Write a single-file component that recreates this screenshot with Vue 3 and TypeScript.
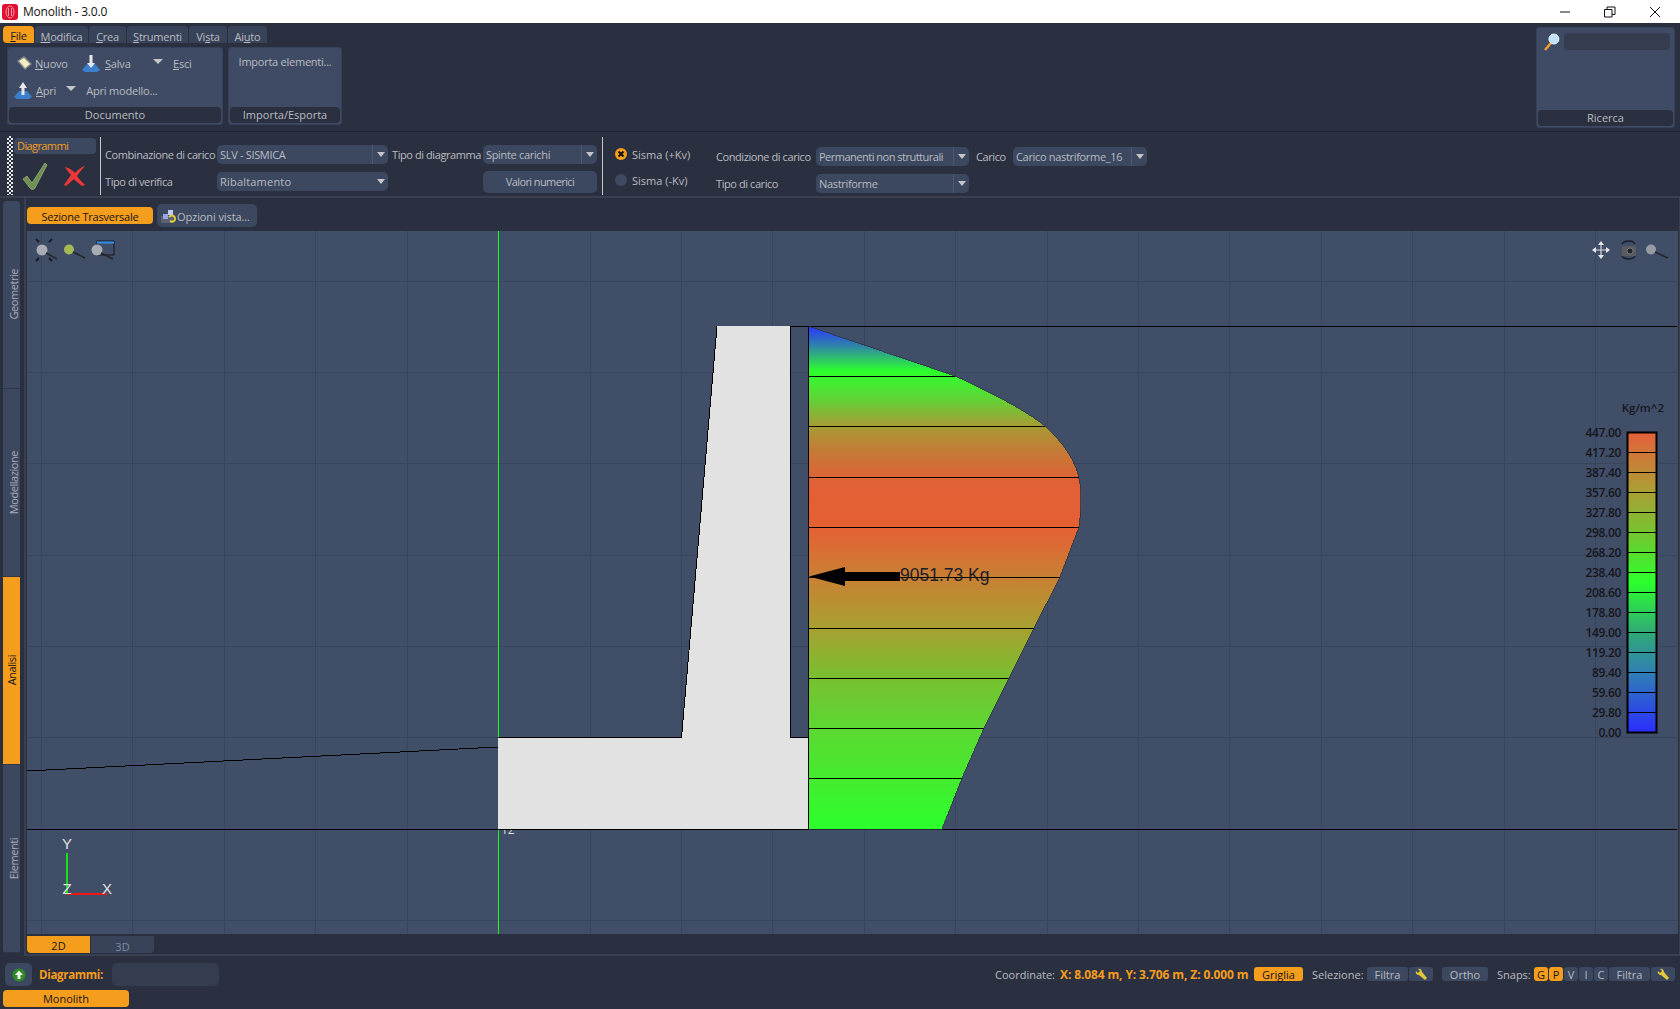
<script setup lang="ts">
const menus = [
  { pre: '', u: 'F', post: 'ile', w: 31, active: true },
  { pre: '', u: 'M', post: 'odifica', w: 53 },
  { pre: '', u: 'C', post: 'rea', w: 37 },
  { pre: '', u: 'S', post: 'trumenti', w: 61 },
  { pre: 'Vi', u: 's', post: 'ta', w: 38 },
  { pre: 'Ai', u: 'u', post: 'to', w: 39 },
]
const vGrid = Array.from({ length: 19 }, (_, i) => Math.round(41 + i * 91.42) + 0.5)
const hGrid = [281, 372, 463, 555, 646, 737, 829, 920].map((y) => y + 0.5)
const bands = [
  [376.5, 955], [426.5, 1045], [477.5, 1079], [527.5, 1079], [577.5, 1060],
  [628.5, 1034], [678.5, 1009], [728.5, 984], [778.5, 962],
]
const scale = [
  '447.00', '417.20', '387.40', '357.60', '327.80', '298.00', '268.20', '238.40',
  '208.60', '178.80', '149.00', '119.20', '89.40', '59.60', '29.80', '0.00',
]
const sideTabs = [
  { label: 'Geometrie' }, { label: 'Modellazione' }, { label: 'Analisi', active: true }, { label: 'Elementi' },
]
</script>

<template>
  <div class="app">
    <header class="titlebar">
      <svg class="logo" width="16" height="16" viewBox="0 0 16 16">
        <rect x="0" y="0" width="16" height="16" rx="3" fill="#e01030" />
        <ellipse cx="8" cy="8" rx="4" ry="6" fill="none" stroke="#f59aa5" stroke-width="1" />
        <path d="M6.5 4v8M9.500 4v8" stroke="#f59aa5" stroke-width="1" />
      </svg>
      <span class="title">Monolith - 3.0.0</span>
      <div class="winbtns">
        <svg width="12" height="12" viewBox="0 0 12 12"><path d="M1 6h10" stroke="#111" fill="none" /></svg>
        <svg width="12" height="12" viewBox="0 0 12 12"><path d="M.5 3.500h7.500v7.500H.5zM3 3.500V1h8v7.500H8" stroke="#111" fill="none" /></svg>
        <svg width="12" height="12" viewBox="0 0 12 12"><path d="M1 1l10 10M11 1L1 11" stroke="#111" fill="none" /></svg>
      </div>
    </header>

    <section class="top">
      <div class="top-left">
        <nav class="menu">
          <div v-for="m in menus" :key="m.post" class="menu-tab" :class="{ on: m.active }" :style="{ width: m.w + 'px' }">{{ m.pre }}<u>{{ m.u }}</u>{{ m.post }}</div>
        </nav>
        <div class="ribbon">
          <div class="group doc">
            <div class="group-body doc-body">
              <div class="doc-row">
                <span class="doc-item nuovo">
                  <svg width="18" height="18" viewBox="0 0 18 18">
                    <path d="M2 6l7-5 8 8-7 6z" fill="#fffbe0" opacity=".35" />
                    <path d="M4 6l5-3 6 6-5 4z" fill="#f3efc0" />
                  </svg>
                  <span><u>N</u>uovo</span>
                </span>
                <span class="doc-item salva">
                  <svg width="18" height="18" viewBox="0 0 18 18">
                    <path d="M0 15l5-6h8l5 6-3 2H3z" fill="#3a80cc" />
                    <path d="M7.500 0h3v8h2.500L9 13 5 8h2.500z" fill="#e8e8ec" />
                  </svg>
                  <span><u>S</u>alva</span>
                </span>
                <i class="tri big esci-tri"></i>
                <span class="esci"><u>E</u>sci</span>
              </div>
              <div class="doc-row row2">
                <span class="doc-item apri">
                  <svg width="18" height="18" viewBox="0 0 18 18">
                    <path d="M0 15l5-6h8l5 6-3 2H3z" fill="#3a80cc" />
                    <path d="M9 0l4 6h-2.500v7h-3V6H5z" fill="#e8e8ec" />
                  </svg>
                  <span><u>A</u>pri</span>
                </span>
                <i class="tri big apri-tri"></i>
                <span class="apri-model">Apri modello...</span>
              </div>
            </div>
            <div class="caption">Documento</div>
          </div>
          <div class="group imp">
            <div class="group-body imp-body">Importa elementi...</div>
            <div class="caption">Importa/Esporta</div>
          </div>
        </div>
      </div>
      <div class="group search">
        <div class="group-body search-body">
          <svg width="17" height="18" viewBox="0 0 17 18">
            <path d="M2 17l6-7" stroke="#f5a030" stroke-width="2.500" />
            <circle cx="11" cy="6" r="5" fill="#bfe4fa" stroke="#eef7fd" />
          </svg>
          <div class="search-input"></div>
        </div>
        <div class="caption">Ricerca</div>
      </div>
    </section>

    <section class="toolbar">
      <div class="handle"></div>
      <div class="tool-head">
        <div class="tool-title">Diagrammi</div>
        <div class="tool-icons">
          <svg width="26" height="28" viewBox="0 0 26 28">
            <path d="M1 17l4-3 5 7L23 1l2 2-12 23c-1 2-4 2-5 0z" fill="#6f9050" stroke="#9fb88a" stroke-width=".7" />
          </svg>
          <svg width="24" height="22" viewBox="0 0 24 22">
            <path d="M2 2c5 1 8 4 10 6 3-3 6-6 10-7-3 3-6 7-8 10 2 3 5 6 8 9l-3 1c-3-2-6-5-8-7-3 2-5 5-8 7l-2-1c2-3 5-7 7-10C6 8 4 5 2 2z" fill="#ee3838" />
          </svg>
        </div>
      </div>
      <div class="vsep"></div>
      <div class="fields f1">
        <span class="lab">Combinazione di carico</span>
        <div class="combo"><span>SLV - SISMICA</span><b><i class="tri"></i></b></div>
        <span class="lab">Tipo di verifica</span>
        <div class="combo wide"><span>Ribaltamento</span><b class="plain"><i class="tri"></i></b></div>
      </div>
      <div class="fields f2">
        <span class="lab">Tipo di diagramma</span>
        <div class="combo"><span>Spinte carichi</span><b><i class="tri"></i></b></div>
        <span></span>
        <div class="btn-values">Valori numerici</div>
      </div>
      <div class="vsep s2"></div>
      <div class="radios">
        <div class="radio-row">
          <svg width="14" height="14" viewBox="0 0 14 14">
            <circle cx="7" cy="7" r="6" fill="#f59d1c" />
            <path d="M4.500 4.500l5 5M9.500 4.500l-5 5" stroke="#111" stroke-width="2" />
          </svg>
          <span>Sisma (+Kv)</span>
        </div>
        <div class="radio-row">
          <svg width="14" height="14" viewBox="0 0 14 14"><circle cx="7" cy="7" r="6" fill="#3d4a62" /></svg>
          <span>Sisma (-Kv)</span>
        </div>
      </div>
      <div class="fields f3">
        <span class="lab">Condizione di carico</span>
        <div class="combo tight"><span>Permanenti non strutturali</span><b><i class="tri"></i></b></div>
        <span class="lab carico">Carico</span>
        <div class="combo"><span>Carico nastriforme_16</span><b><i class="tri"></i></b></div>
        <span class="lab">Tipo di carico</span>
        <div class="combo"><span>Nastriforme</span><b><i class="tri"></i></b></div>
      </div>
    </section>

    <main class="main">
      <aside class="side">
        <div v-for="t in sideTabs" :key="t.label" class="side-tab" :class="{ on: t.active }"><span>{{ t.label }}</span></div>
      </aside>
      <div class="panel">
        <div class="tabstrip">
          <div class="tab-on">Sezione Trasversale</div>
          <div class="tab-opt">
            <svg width="17" height="15" viewBox="0 0 17 15">
              <rect x="1" y="7" width="12" height="7" fill="#5b6272" />
              <rect x="3" y="5" width="5" height="5" fill="#9aa4e8" />
              <rect x="8" y="1" width="5" height="5" fill="#c6c9f0" />
              <path d="M9 8c3-3 6-1 6 2s-3 3-5 2" fill="none" stroke="#e4d238" stroke-width="2" />
            </svg>
            <span>Opzioni vista...</span>
          </div>
        </div>

        <div class="canvas">
          <svg class="scene" width="1650" height="703" viewBox="27 231 1650 703">
            <defs>
              <linearGradient id="pressure" gradientUnits="userSpaceOnUse" x1="0" y1="326" x2="0" y2="829">
                <stop offset="0" stop-color="#2a34ff" />
                <stop offset=".04" stop-color="#2f85a8" />
                <stop offset=".09" stop-color="#2cff2c" />
                <stop offset=".14" stop-color="#5ad835" />
                <stop offset=".2" stop-color="#a89a35" />
                <stop offset=".25" stop-color="#c47a36" />
                <stop offset=".31" stop-color="#e26036" />
                <stop offset=".4" stop-color="#e56033" />
                <stop offset=".5" stop-color="#c98034" />
                <stop offset=".6" stop-color="#a8a030" />
                <stop offset=".7" stop-color="#78c030" />
                <stop offset=".8" stop-color="#5cd832" />
                <stop offset="1" stop-color="#2cff2c" />
              </linearGradient>
              <linearGradient id="bar" x1="0" y1="1" x2="0" y2="0">
                <stop offset="0" stop-color="#2a2dff" />
                <stop offset=".2" stop-color="#3080b4" />
                <stop offset=".33" stop-color="#30a878" />
                <stop offset=".5" stop-color="#2cff2c" />
                <stop offset=".68" stop-color="#7cc030" />
                <stop offset=".82" stop-color="#b09a36" />
                <stop offset="1" stop-color="#e5603a" />
              </linearGradient>
              <clipPath id="tick"><rect x="498" y="830" width="30" height="5" /></clipPath>
            </defs>

            <path v-for="x in vGrid" :key="'v' + x" :d="`M${x} 231V934`" class="grid" />
            <path v-for="y in hGrid" :key="'h' + y" :d="`M27 ${y}H1677`" class="grid" />
            <path d="M498.500 231V934" class="axis-green" />

            <path d="M717 326.500H1677M27 829.500H1677" class="blk" />
            <path d="M27 771L498 747" class="blk" />
            <path d="M717 326H790V737.500H808.500V829H498V737.500H681.500Z" fill="#e2e2e2" />
            <path d="M681.500 737.500H498M681.500 737.500L717 326.500M790.500 326V737.500H808.500V829" class="blk" />
            <text x="501" y="834" class="tick" clip-path="url(#tick)">12</text>

            <path d="M808 326L955 376C990 392 1025 410 1045 426C1065 445 1081 465 1081 497C1081 510 1080 520 1079 527L1060 577L1034 628L1009 678L984 728L962 778L942 829H808Z" fill="url(#pressure)" stroke="#2d3440" stroke-width=".8" shape-rendering="crispEdges" />
            <path v-for="b in bands" :key="b[0]" :d="`M809 ${b[0]}H${b[1]}`" class="blk" />
            <path d="M808.500 326V829" class="blk" />
            <path d="M809 576.500L845 567V572H900V581H845V586Z" fill="#000" />
            <text x="900" y="581" class="force">9051.73 Kg</text>

            <!-- view icons, top left -->
            <g>
              <path d="M36 239l3 3M52 239l-3 3M36 261l3-3M52 261l-3-3" stroke="#181c28" stroke-width="2" />
              <circle cx="42" cy="250" r="5.500" fill="#a9adb3" />
              <path d="M46 253l11 6" stroke="#23262e" stroke-width="1.500" />
              <circle cx="69" cy="249.500" r="5" fill="#a3ba55" />
              <path d="M73 252l12 6" stroke="#23262e" stroke-width="1.500" />
              <path d="M97 241h17v14H97z" fill="none" stroke="#14161e" />
              <path d="M97 241.500h17v2H97z" fill="#3090ea" />
              <circle cx="97" cy="250" r="5.500" fill="#a9adb3" />
              <path d="M101 253l12 6" stroke="#23262e" stroke-width="1.500" />
            </g>

            <!-- view icons, top right -->
            <g>
              <path d="M1601 243v14M1594 250h14" stroke="#d6d8dc" stroke-width="1.200" />
              <path d="M1601 241l-3 4h6zM1601 259l-3-4h6zM1592 250l4-3v6zM1610 250l-4-3v6z" fill="#e8e8e8" />
              <path d="M1622 244c3-4 11-4 13 0M1622 256c3 4 11 4 13 0" fill="none" stroke="#1a1d26" stroke-width="1.300" />
              <rect x="1622" y="246" width="14" height="10" rx="1" fill="#5a5c60" />
              <circle cx="1630" cy="251" r="3" fill="#24262c" stroke="#8a8c90" stroke-width=".7" />
              <circle cx="1651" cy="249.500" r="5" fill="#989da3" />
              <path d="M1655 252l13 6" stroke="#23262e" stroke-width="1.500" />
            </g>

            <!-- axes -->
            <path d="M67 853V893" stroke="#16e016" stroke-width="2" />
            <path d="M67 894H107" stroke="#ee1818" stroke-width="2" />
            <text x="67" y="849" class="axis">Y</text>
            <text x="67" y="894" class="axis">Z</text>
            <text x="107" y="894" class="axis">X</text>

            <!-- scale -->
            <text x="1664" y="412" class="unit">Kg/m^2</text>
            <rect x="1627.500" y="432.500" width="29" height="300" fill="url(#bar)" stroke="#000" stroke-width="2" />
            <path v-for="i in 14" :key="'s' + i" :d="`M1627 ${432.500 + i * 20}H1657`" stroke="#000" />
            <text v-for="(s, i) in scale" :key="s" x="1621" :y="436.500 + i * 20" class="val">{{ s }}</text>
          </svg>
        </div>

        <div class="bottabs">
          <div class="bt on">2D</div>
          <div class="bt">3D</div>
        </div>
      </div>
    </main>

    <footer class="status">
      <div class="st-left">
        <div class="up">
          <svg width="14" height="14" viewBox="0 0 14 14">
            <circle cx="7" cy="7" r="6.500" fill="#2f8c26" />
            <path d="M7 2.500l4 4.500H8.500v4h-3V7H3z" fill="#f0f4ee" />
          </svg>
        </div>
        <span class="st-name">Diagrammi:</span>
        <div class="st-box"></div>
      </div>
      <div class="st-right">
        <span class="coord">Coordinate:</span>
        <b class="coord-v">X: 8.084 m, Y: 3.706 m, Z: 0.000 m</b>
        <span class="chip griglia">Griglia</span>
        <span class="cap sel">Selezione:</span>
        <span class="chip filtra">Filtra</span>
        <span class="chip wr">
          <svg width="13" height="13" viewBox="0 0 13 13"><path d="M1 3l2 2 2-2-2-2c2-1 4 1 4 3l5 6-2 2-6-5C2 7 0 5 1 3z" fill="#e2c83a" /></svg>
        </span>
        <span class="chip ortho">Ortho</span>
        <span class="cap snaps">Snaps:</span>
        <span class="chip ltr on">G</span>
        <span class="chip ltr on">P</span>
        <span class="chip ltr">V</span>
        <span class="chip ltr">I</span>
        <span class="chip ltr">C</span>
        <span class="chip filtra">Filtra</span>
        <span class="chip wr">
          <svg width="13" height="13" viewBox="0 0 13 13"><path d="M1 3l2 2 2-2-2-2c2-1 4 1 4 3l5 6-2 2-6-5C2 7 0 5 1 3z" fill="#e2c83a" /></svg>
        </span>
      </div>
    </footer>
    <div class="app-tab-row"><div class="app-tab">Monolith</div></div>
  </div>
</template>

<style scoped>
.app {
  width: 1680px;
  height: 1009px;
  overflow: hidden;
  display: flex;
  flex-direction: column;
  background: #2b3040;
  color: #b9bcc0;
  font: 11px "Open Sans", "Noto Sans", sans-serif;
}
u { text-underline-offset: 1px; }

.titlebar {
  height: 23px;
  flex: none;
  background: #fff;
  display: flex;
  align-items: center;
  padding-left: 2px;
  color: #111;
}
.logo { margin-right: 5px; }
.title { font-size: 12px; letter-spacing: -.2px; }
.winbtns {
  margin-left: auto;
  display: flex;
  gap: 33px;
  margin-right: 19px;
}

.top { height: 108px; flex: none; display: flex; }
.top-left { flex: 1; }
.menu { display: flex; gap: 1px; margin: 3px 0 0 3px; height: 17px; }
.menu-tab {
  background: #38435a;
  border-radius: 4px 4px 0 0;
  text-align: center;
  line-height: 22px;
  white-space: nowrap;
  letter-spacing: -.25px;
  overflow: hidden;
}
.menu-tab.on { background: #f59d1c; color: #15161a; line-height: 19px; border-radius: 4px 4px 0 4px; }

.ribbon { display: flex; gap: 5px; margin: 4px 0 0 7px; }
.group {
  height: 78px;
  box-sizing: border-box;
  background: #3f4b64;
  border-radius: 4px;
  box-shadow: inset 0 0 0 1px #36415a;
  display: flex;
  flex-direction: column;
  padding: 0 2px 2px;
}
.group-body { flex: 1; }
.caption {
  height: 16px;
  flex: none;
  background: #2b3040;
  border-radius: 4px;
  text-align: center;
  line-height: 16px;
}
.doc { width: 216px; }
.imp { width: 114px; }
.doc-row { display: flex; align-items: center; height: 19px; margin-top: 7px; position: relative; letter-spacing: -.2px; }
.row2 { margin-top: 8px; }
.doc-item { display: flex; align-items: center; gap: 2px; }
.nuovo { margin-left: 6px; width: 67px; }
.salva { width: 71px; gap: 5px; }
.esci { margin-left: 10px; }
.apri { margin-left: 5px; gap: 4px; }
.apri-model { margin-left: 10px; }
.tri {
  display: block;
  width: 0;
  height: 0;
  border-left: 4px solid transparent;
  border-right: 4px solid transparent;
  border-top: 5px solid #c4c6ca;
}
.tri.big { border-left-width: 5px; border-right-width: 5px; }
.apri-tri { margin-left: 10px; margin-top: -4px; }
.esci-tri { margin-top: -4px; }
.imp-body { text-align: center; padding-top: 7px; letter-spacing: -.25px; }

.search {
  width: 139px;
  height: 101px;
  margin: 4px 5px 0 0;
  flex: none;
}
.search-body { display: flex; align-items: flex-start; gap: 4px; padding: 6px 3px 0 5px; }
.search-input { width: 107px; height: 17px; background: #343c50; border-radius: 4px; }

.toolbar {
  height: 67px;
  flex: none;
  display: flex;
  align-items: flex-start;
  border-top: 1px solid #1f2431;
  border-bottom: 2px solid #3a4050;
  padding-left: 7px;
  box-sizing: border-box;
}
.handle {
  width: 6px;
  height: 59px;
  margin-top: 4px;
  background: repeating-conic-gradient(#e6e6e6 0 25%, transparent 0 50%) 0 0 / 4px 4px;
}
.tool-head { width: 82px; margin: 6px 0 0 1px; }
.tool-title {
  height: 16px;
  line-height: 16px;
  background: #3c4860;
  border-radius: 4px;
  color: #f59d1c;
  padding-left: 3px;
  letter-spacing: -.6px;
}
.tool-icons { display: flex; align-items: center; gap: 15px; padding: 8px 0 0 8px; }
.vsep { width: 1px; height: 58px; margin: 5px 4px 0 4px; background: #c8c8c8; flex: none; }
.vsep.s2 { margin: 5px 0 0 5px; }
.fields { display: grid; row-gap: 8px; align-items: center; white-space: nowrap; }
.lab { letter-spacing: -.42px; }
.f1 { grid-template-columns: 112px 171px; grid-auto-rows: 19px; margin-top: 13px; }
.f2 { grid-template-columns: 91px 114px; grid-auto-rows: 19px; margin: 13px 0 0 4px; }
.f3 { grid-template-columns: 100px 153px 44px 134px; grid-auto-rows: 19px; margin: 15px 0 0 0; }
.carico { margin-left: 7px; }
.combo {
  height: 19px;
  display: flex;
  align-items: stretch;
  background: #3c4860;
  border-radius: 5px;
  line-height: 19px;
  padding-left: 3px;
  letter-spacing: -.32px;
}
.combo.wide { letter-spacing: .2px; }
.combo.tight { letter-spacing: -.5px; }
.combo span { flex: 1; }
.combo b {
  width: 15px;
  flex: none;
  border-left: 1px solid #4d596f;
  display: flex;
  align-items: center;
  justify-content: center;
}
.combo b.plain { border-left-color: #3c4860; }
.btn-values {
  height: 22px;
  margin-top: 1px;
  line-height: 22px;
  text-align: center;
  background: #3c4860;
  border-radius: 5px;
  letter-spacing: -.6px;
}
.radios { width: 102px; margin: 15px 0 0 11px; display: flex; flex-direction: column; gap: 12px; flex: none; }
.radio-row { display: flex; align-items: center; gap: 4px; height: 14px; }

.main { height: 758px; flex: none; display: flex; }
.side {
  width: 17px;
  margin: 3px 4px 0 3px;
  height: 752px;
  display: flex;
  flex-direction: column;
  background: #3c4860;
  border-radius: 4px;
  flex: none;
}
.side-tab {
  flex: 1;
  display: flex;
  align-items: center;
  justify-content: center;
  border-bottom: 1px solid #2f3648;
  padding-left: 3px;
}
.side-tab span { writing-mode: vertical-rl; transform: rotate(180deg); color: #a9adb4; letter-spacing: -.45px; }
.side-tab.on { background: #f59d1c; padding-left: 0; }
.side-tab.on span { color: #15161a; }

.panel {
  flex: 1;
  border-left: 2px solid #3a4050;
  border-right: 1px solid #3a4050;
  border-bottom: 2px solid #3a4050;
  padding: 0 1px 0 1px;
  display: flex;
  flex-direction: column;
  min-width: 0;
}
.tabstrip { height: 33px; flex: none; display: flex; align-items: flex-start; gap: 4px; padding-top: 6px; box-sizing: border-box; }
.tab-on {
  margin-top: 3px;
  width: 126px;
  height: 17px;
  line-height: 19px;
  text-align: center;
  background: #f59d1c;
  border-radius: 4px;
  color: #15161a;
  letter-spacing: -.2px;
  overflow: hidden;
}
.tab-opt {
  width: 100px;
  height: 23px;
  display: flex;
  align-items: center;
  background: #3c4860;
  border-radius: 5px;
  padding: 1px 0 0 3px;
  box-sizing: border-box;
  letter-spacing: -.1px;
}
.canvas { height: 703px; flex: none; background: #414e68; }
.scene { display: block; }
.grid { stroke: #39455c; stroke-width: 1; fill: none; shape-rendering: crispEdges; }
.axis-green { stroke: #1cff1c; stroke-width: 1; shape-rendering: crispEdges; }
.blk { stroke: #000; stroke-width: 1; fill: none; shape-rendering: crispEdges; }
.tick { font: 12px "Open Sans", sans-serif; fill: #e0e0e0; }
.force { font: 17.500px "Liberation Sans", sans-serif; fill: #1d2026; }
.axis { font: 15px "Liberation Sans", sans-serif; fill: #e0e2e4; text-anchor: middle; }
.unit { font: 600 11.500px "Open Sans", sans-serif; fill: #15171d; text-anchor: end; }
.val { font: 600 12px "Open Sans", sans-serif; fill: #15171d; text-anchor: end; letter-spacing: -.35px; }

.bottabs { display: flex; gap: 1px; margin-top: 2px; }
.bt {
  width: 63px;
  height: 17px;
  line-height: 21px;
  text-align: center;
  background: #38435a;
  color: #7f8a9e;
  border-radius: 0 0 4px 0;
  overflow: hidden;
}
.bt.on { background: #f59d1c; color: #15161a; border-radius: 0 0 0 4px; line-height: 19px; }

.status { height: 32px; flex: none; display: flex; justify-content: space-between; }
.st-left { display: flex; align-items: flex-start; padding: 7px 0 0 5px; }
.up {
  width: 27px;
  height: 23px;
  background: #3c4860;
  border-radius: 5px;
  display: flex;
  align-items: center;
  justify-content: center;
}
.st-name { margin: 4px 0 0 7px; width: 73px; color: #f59d1c; font-weight: 700; font-size: 11.500px; letter-spacing: -.3px; }
.st-box { width: 107px; height: 23px; background: #343c50; border-radius: 5px; }
.st-right { display: flex; align-items: flex-start; padding: 11px 5px 0 0; line-height: 16px; }
.coord { line-height: 15px; width: 65px; }
.coord-v { line-height: 15px; width: 194px; color: #f59d1c; white-space: nowrap; font-size: 12px; letter-spacing: -.12px; }
.chip {
  height: 14px;
  padding-top: 1px;
  box-sizing: border-box;
  background: #3c4860;
  border-radius: 3px;
  text-align: center;
  display: flex;
  align-items: center;
  justify-content: center;
}
.griglia { width: 49px; background: #f59d1c; color: #15161a; }
.cap { line-height: 15px; }
.sel { width: 55px; margin-left: 9px; }
.filtra { width: 41px; }
.wr { width: 24px; margin-left: 1px; }
.ortho { width: 46px; margin-left: 9px; }
.snaps { width: 37px; margin-left: 9px; }
.ltr { width: 14px; margin-right: 1px; }
.ltr.on { background: #f59d1c; color: #15161a; }

.app-tab-row { padding: 2px 0 0 3px; }
.app-tab {
  width: 126px;
  height: 17px;
  line-height: 17px;
  text-align: center;
  background: #f59d1c;
  border-radius: 4px;
  color: #15161a;
}
</style>
